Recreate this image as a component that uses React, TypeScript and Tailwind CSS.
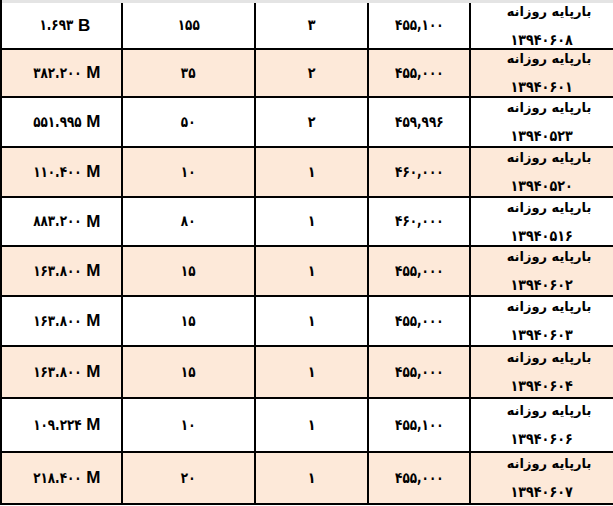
import React from "react";

const rows: [string, string, string, string, string, string, string][] = [
  ["۱.۶۹۳", "B", "۱۵۵", "۳", "۴۵۵,۱۰۰", "۱۳۹۴۰۶۰۸", "h-[50px]"],
  ["۳۸۲.۲۰۰", "M", "۳۵", "۲", "۴۵۵,۰۰۰", "۱۳۹۴۰۶۰۱", "h-[48px]"],
  ["۵۵۱.۹۹۵", "M", "۵۰", "۲", "۴۵۹,۹۹۶", "۱۳۹۴۰۵۲۳", "h-[50px]"],
  ["۱۱۰.۴۰۰", "M", "۱۰", "۱", "۴۶۰,۰۰۰", "۱۳۹۴۰۵۲۰", "h-[50px]"],
  ["۸۸۳.۲۰۰", "M", "۸۰", "۱", "۴۶۰,۰۰۰", "۱۳۹۴۰۵۱۶", "h-[49px]"],
  ["۱۶۳.۸۰۰", "M", "۱۵", "۱", "۴۵۵,۰۰۰", "۱۳۹۴۰۶۰۲", "h-[50px]"],
  ["۱۶۳.۸۰۰", "M", "۱۵", "۱", "۴۵۵,۰۰۰", "۱۳۹۴۰۶۰۳", "h-[50px]"],
  ["۱۶۳.۸۰۰", "M", "۱۵", "۱", "۴۵۵,۰۰۰", "۱۳۹۴۰۶۰۴", "h-[52px]"],
  ["۱۰۹.۲۲۴", "M", "۱۰", "۱", "۴۵۵,۱۰۰", "۱۳۹۴۰۶۰۶", "h-[54px]"],
  ["۲۱۸.۴۰۰", "M", "۲۰", "۱", "۴۵۵,۰۰۰", "۱۳۹۴۰۶۰۷", "h-[52px]"],
];

export default function App() {
  return (
    <div className="w-[613px] h-[506px] overflow-hidden bg-white font-['DejaVu_Sans',sans-serif] text-black">
      <div className="w-[620px] border-l-2 border-black">
        {rows.map((r, i) => {
          const bg = i % 2 === 1 ? "bg-[#fde9d9]" : "bg-white";
          const top = i === 0 ? "border-t-[3px] border-t-[#e4e4e4]" : "";
          return (
            <div key={i} className={`flex border-b-2 border-black ${bg} ${top} ${r[6]}`}>
              <div className="w-[119px] flex items-center justify-center gap-[5px] pr-[2px]">
                <span className="block text-[15px] font-bold scale-x-[0.8] origin-right" dir="ltr">
                  {r[0]}
                </span>
                <span className="block text-[17px] font-bold font-['Liberation_Sans',Arial,sans-serif]">
                  {r[1]}
                </span>
              </div>
              <div className="w-[133px] border-l-2 border-black flex items-center justify-center">
                <span className="block text-[15px] font-bold scale-x-[0.8]">{r[2]}</span>
              </div>
              <div className="w-[113px] border-l-2 border-black flex items-center justify-center">
                <span className="block text-[15px] font-bold scale-x-[0.85]">{r[3]}</span>
              </div>
              <div className="w-[102px] border-l-2 border-black flex items-center justify-center" dir="ltr">
                <span className="block text-[15px] font-bold scale-x-[0.8]">{r[4]}</span>
              </div>
              <div className="w-[151px] border-l-2 border-black flex flex-col items-center justify-center overflow-hidden pr-[7px]">
                <div className="text-[13px] font-bold leading-[28px] pl-[14px]" dir="rtl">
                  بارپایه روزانه
                </div>
                <div className="block text-[15px] font-bold leading-[28px] scale-x-[0.85]" dir="ltr">
                  {r[5]}
                </div>
              </div>
            </div>
          );
        })}
      </div>
    </div>
  );
}
